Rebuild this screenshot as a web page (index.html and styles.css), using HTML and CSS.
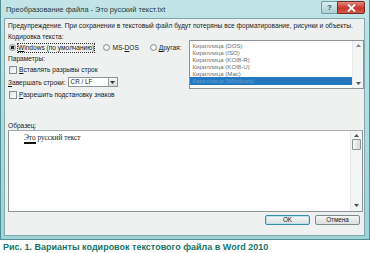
FILE: index.html
```html
<!DOCTYPE html>
<html lang="ru">
<head>
<meta charset="utf-8">
<link rel="stylesheet" href="styles.css">
</head>
<body>
<div class="window">
  <div class="titlebar">
    <span class="title">Преобразование файла - Это русский текст.txt</span>
    <div class="tb-buttons">
      <span class="tb-help">?</span>
      <span class="tb-close"><svg width="11" height="8" viewBox="0 0 11 8"><path d="M2 0.5 L9 7.5 M9 0.5 L2 7.5" stroke="#fff" stroke-width="1.8"/></svg></span>
    </div>
  </div>
  <div class="client">
    <div class="line warn">Предупреждение. При сохранении в текстовый файл будут потеряны все форматирование, рисунки и объекты.</div>
    <div class="line">Кодировка текста:</div>
    <div class="top">
      <div class="left">
        <div class="line radios">
          <span class="radio on"></span><span class="focus"><u>W</u>indows (по умолчанию)</span>
          <span class="radio r2"></span><span>MS-<u>D</u>OS</span>
          <span class="radio r3"></span><span><u>Д</u>ругая:</span>
        </div>
        <div class="line">Параметры:</div>
        <div class="line chk"><span class="box"></span><span><u>В</u>ставлять разрывы строк</span></div>
        <div class="combo-row"><span><u>З</u>авершать строки:</span>
          <span class="combo"><span class="combo-text">CR / LF</span><span class="combo-btn"><svg width="5" height="3" viewBox="0 0 5 3"><path d="M0 0 H5 L2.5 3Z" fill="#333"/></svg></span></span>
        </div>
        <div class="line chk"><span class="box"></span><span><u>Р</u>азрешить подстановку знаков</span></div>
      </div>
      <div class="listbox">
        <div class="items">
          <div class="item">Кириллица (DOS)</div>
          <div class="item">Кириллица (ISO)</div>
          <div class="item">Кириллица (KOI8-R)</div>
          <div class="item">Кириллица (KOI8-U)</div>
          <div class="item">Кириллица (Mac)</div>
          <div class="item sel">Кириллица (Windows)</div>
        </div>
        <div class="vscroll">
          <svg width="5" height="3" viewBox="0 0 5 3"><path d="M0 3 H5 L2.5 0Z" fill="#888"/></svg>
          <svg width="5" height="3" viewBox="0 0 5 3"><path d="M0 0 H5 L2.5 3Z" fill="#555"/></svg>
        </div>
      </div>
    </div>
    <div class="line sample-label">Образец:</div>
    <div class="sample">
      <div class="sample-body">
        <div class="sample-text">Это русский текст</div>
        <div class="cursor"></div>
      </div>
      <div class="vscroll s2">
        <div class="s-top">
          <svg width="5" height="3" viewBox="0 0 5 3"><path d="M0 3 H5 L2.5 0Z" fill="#555"/></svg>
          <span class="thumb"></span>
        </div>
        <svg width="5" height="3" viewBox="0 0 5 3"><path d="M0 0 H5 L2.5 3Z" fill="#555"/></svg>
      </div>
    </div>
    <div class="buttons">
      <span class="btn ok">OK</span>
      <span class="btn">Отмена</span>
    </div>
  </div>
</div>
<div class="caption">Рис. 1. Варианты кодировок текстового файла в Word 2010</div>
</body>
</html>
```

FILE: styles.css
```css
html, body {
  margin: 0;
  padding: 0;
  background: #ffffff;
}
body {
  width: 370px;
  height: 253px;
  overflow: hidden;
  font-family: "Liberation Sans", Arial, sans-serif;
}
.window {
  width: 370px;
  height: 240px;
  box-sizing: border-box;
  background: linear-gradient(#c2e4e6, #9fd3d6);
  border: 1px solid #4f8f95;
  border-top: none;
  display: flex;
  flex-direction: column;
  padding: 0 4px 3px 3px;
}
.titlebar {
  height: 18px;
  display: flex;
  align-items: center;
  justify-content: space-between;
  flex-shrink: 0;
}
.title {
  font-size: 7.4px;
  color: #1f3a3e;
  padding-left: 2px;
}
.tb-buttons {
  display: flex;
  align-self: flex-start;
  margin-top: 1px;
}
.tb-help {
  width: 16px;
  height: 13px;
  box-sizing: border-box;
  border: 1px solid #6f9fa3;
  border-right: none;
  border-radius: 2px 0 0 2px;
  background: linear-gradient(#d9eeef, #a8cfd2);
  font-size: 8px;
  font-weight: bold;
  color: #3b5a60;
  display: flex;
  align-items: center;
  justify-content: center;
}
.tb-close {
  width: 28px;
  height: 13px;
  box-sizing: border-box;
  border: 1px solid #7a2a26;
  border-radius: 0 2px 2px 0;
  background: linear-gradient(#e48a80, #c9352c 55%, #d55a4c);
  display: flex;
  align-items: center;
  justify-content: center;
}
.client {
  flex: 1;
  background: #eff1f0;
  border: 1px solid #7ea8ac;
  font-size: 6.6px;
  color: #1a1a1a;
  padding: 1px 0 0 3px;
  display: flex;
  flex-direction: column;
}
.line {
  height: 11px;
  line-height: 11px;
  white-space: nowrap;
}
.warn {
  letter-spacing: 0.02px;
}
u {
  text-decoration-thickness: 0.5px;
  text-underline-offset: 1px;
}
.top {
  display: flex;
}
.left {
  width: 183px;
  display: flex;
  flex-direction: column;
}
.radios {
  display: flex;
  align-items: center;
}
.radio {
  width: 5px;
  height: 5px;
  border-radius: 50%;
  border: 1px solid #8a8f92;
  background: radial-gradient(#ffffff, #dadfe2);
  margin: 0 2px 0 1px;
  flex-shrink: 0;
}
.radio.on {
  background: radial-gradient(#1d2b2f 45%, #d5dadd 55%);
}
.radio.r2 { margin-left: 9px; }
.radio.r3 { margin-left: 11px; }
.focus {
  outline: 1px dotted #333;
  outline-offset: 0;
  line-height: 8px;
}
.chk {
  display: flex;
  align-items: center;
}
.box {
  width: 6px;
  height: 6px;
  border: 1px solid #8a9194;
  background: linear-gradient(135deg, #dde2e4, #ffffff);
  margin: 0 2px 0 1px;
  flex-shrink: 0;
}
.combo-row {
  height: 14px;
  display: flex;
  align-items: center;
  gap: 2px;
}
.combo {
  width: 50px;
  height: 10px;
  box-sizing: border-box;
  border: 1px solid #8e9598;
  background: #fff;
  display: flex;
  justify-content: space-between;
  align-items: stretch;
}
.combo-text {
  padding-left: 2px;
  line-height: 8px;
  font-size: 6.3px;
}
.combo-btn {
  width: 8px;
  border-left: 1px solid #9aa2a5;
  background: linear-gradient(#f4f5f5, #d9dcdd);
  display: flex;
  align-items: center;
  justify-content: center;
}
.listbox {
  width: 176px;
  height: 49px;
  margin-top: -2px;
  box-sizing: border-box;
  border: 1px solid #8c9396;
  background: #fff;
  display: flex;
}
.items {
  flex: 1;
  padding-top: 1px;
}
.item {
  height: 7px;
  line-height: 7px;
  font-size: 6.1px;
  color: #6c6c6c;
  padding-left: 2px;
  white-space: nowrap;
}
.item.sel {
  background: #2478c0;
  color: rgba(255, 255, 255, 0.3);
  height: 8px;
  line-height: 8px;
}
.vscroll {
  width: 11px;
  border-left: 1px solid #e6e8e9;
  background: #f4f5f5;
  display: flex;
  flex-direction: column;
  justify-content: space-between;
  align-items: center;
  padding: 3px 0;
  box-sizing: border-box;
}
.sample-label {
  margin-top: 21px;
  height: 9px;
  line-height: 9px;
}
.sample {
  width: 355px;
  height: 82px;
  box-sizing: border-box;
  border: 1px solid #8e9598;
  border-top-color: #a7acae;
  background: #fff;
  display: flex;
}
.sample-body {
  flex: 1;
  padding: 2px 0 0 15px;
}
.sample-text {
  font-family: "Liberation Serif", "Times New Roman", serif;
  font-size: 7.3px;
  line-height: 9px;
  color: #222;
}
.cursor {
  width: 12px;
  height: 1.5px;
  background: #111;
}
.vscroll.s2 {
  padding: 3px 0 4px;
  width: 12px;
}
.s-top {
  display: flex;
  flex-direction: column;
  align-items: center;
  gap: 2px;
}
.thumb {
  width: 7px;
  height: 9px;
  border: 1px solid #8c9396;
  border-radius: 1px;
  background: linear-gradient(90deg, #f6f7f7, #d8dbdc);
}
.buttons {
  display: flex;
  justify-content: flex-end;
  gap: 5px;
  padding-right: 4px;
  margin-top: 3px;
}
.btn {
  width: 45px;
  height: 10px;
  box-sizing: border-box;
  border: 1px solid #7f8a8d;
  border-radius: 2px;
  background: linear-gradient(#f6f6f6, #dcdedf);
  font-size: 6.3px;
  line-height: 8px;
  text-align: center;
  color: #1a1a1a;
}
.btn.ok {
  border-color: #3b8ea8;
  box-shadow: inset 0 0 0 1px #b9e2ee;
}
.caption {
  margin: 2px 0 0 3px;
  font-family: "Liberation Sans Narrow", "Liberation Sans", sans-serif;
  font-stretch: condensed;
  font-weight: bold;
  font-size: 9px;
  color: #167566;
  white-space: nowrap;
  line-height: 11px;
}
```
